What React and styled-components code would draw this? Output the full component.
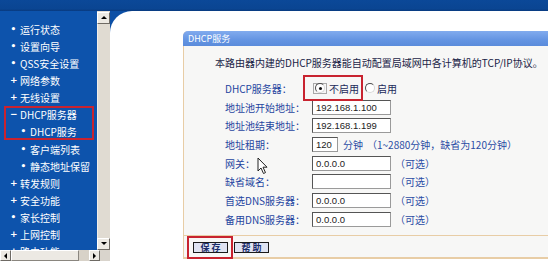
import React from 'react'
import styled, { createGlobalStyle } from 'styled-components'

const GlobalStyle = createGlobalStyle`
  html, body { margin:0; padding:0; background:#fff; }
  body { font-family:"Noto Sans CJK SC", sans-serif; }
`

const menuTop = [
  { mark: '•', text: '运行状态' },
  { mark: '•', text: '设置向导' },
  { mark: '•', text: 'QSS安全设置' },
  { mark: '+', text: '网络参数' },
  { mark: '+', text: '无线设置' },
]
const menuHl = [
  { mark: '−', text: 'DHCP服务器' },
  { mark: '•', text: 'DHCP服务', sub: true },
]
const menuRest = [
  { mark: '•', text: '客户端列表', sub: true },
  { mark: '•', text: '静态地址保留', sub: true },
  { mark: '+', text: '转发规则' },
  { mark: '+', text: '安全功能' },
  { mark: '•', text: '家长控制' },
  { mark: '+', text: '上网控制' },
  { mark: '+', text: '路由功能' },
]

const fields = [
  { label: '地址池开始地址：', value: '192.168.1.100' },
  { label: '地址池结束地址：', value: '192.168.1.199' },
  { label: '地址租期：', lease: true },
  { label: '网关：', value: '0.0.0.0', optional: true },
  { label: '缺省域名：', value: '', optional: true },
  { label: '首选DNS服务器：', value: '0.0.0.0', optional: true },
  { label: '备用DNS服务器：', value: '0.0.0.0', optional: true },
]

const MenuItem = ({ item }) => (
  <Item $sub={item.sub}>
    <Mark>{item.mark}</Mark>
    <span>{item.text}</span>
  </Item>
)

const Arrow = ({ dir }) => {
  const pts = {
    up: '1,5 4,2 7,5',
    down: '1,2 4,5 7,2',
    left: '5,1 2,4 5,7',
    right: '2,1 5,4 2,7',
  }[dir]
  return (
    <ArrowBtn>
      <svg width="8" height="8" viewBox="0 0 8 8">
        <polygon points={pts} fill="#000" />
      </svg>
    </ArrowBtn>
  )
}

const App = () => {
  return (
    <Frame>
      <GlobalStyle />
      <TopBar />
      <Main>
        <LeftPane>
          <LeftRow>
            <Sidebar>
              {menuTop.map((m) => <MenuItem key={m.text} item={m} />)}
              <Highlight>
                {menuHl.map((m) => <MenuItem key={m.text} item={m} />)}
              </Highlight>
              {menuRest.map((m) => <MenuItem key={m.text} item={m} />)}
            </Sidebar>
            <VScroll>
              <Arrow dir="up" />
              <VTrack />
              <Arrow dir="down" />
            </VScroll>
          </LeftRow>
          <HScroll>
            <Arrow dir="left" />
            <HThumb />
            <HTrack />
            <Arrow dir="right" />
            <Corner />
          </HScroll>
        </LeftPane>

        <Content>
          <Panel>
            <PanelHead>DHCP服务</PanelHead>
            <PanelBody>
              <Intro>本路由器内建的DHCP服务器能自动配置局域网中各计算机的TCP/IP协议。</Intro>
              <Row>
                <Label>DHCP服务器：</Label>
                <RadioBox>
                  <Focus><Radio $checked /></Focus>
                  <RadioText>不启用</RadioText>
                </RadioBox>
                <Radio />
                <RadioText>启用</RadioText>
              </Row>
              {fields.map((f) => (
                <Row key={f.label}>
                  <Label>{f.label}</Label>
                  {f.lease ? (
                    <>
                      <Field value="120" readOnly $w={26} />
                      <Note $gap={5}>分钟</Note>
                      <Note $gap={4}>（1~2880分钟，缺省为120分钟）</Note>
                    </>
                  ) : (
                    <>
                      <Field value={f.value} readOnly $w={79} />
                      {f.optional && <Note $gap={4}>（可选）</Note>}
                    </>
                  )}
                </Row>
              ))}
            </PanelBody>
            <PanelFoot>
              <SaveMark>
                <Btn>保 存</Btn>
              </SaveMark>
              <Btn>帮 助</Btn>
            </PanelFoot>
          </Panel>
        </Content>
      </Main>
      <Cursor width="12" height="18" viewBox="0 0 12 18">
        <path d="M1 1 L1 14 L4 11 L6.5 16.5 L8.5 15.6 L6 10.2 L10 10.2 Z" fill="#fff" stroke="#222" strokeWidth="1" strokeLinejoin="round" />
      </Cursor>
    </Frame>
  )
}

const Frame = styled.div`
  position:relative;
  width:548px;
  height:261px;
  display:flex;
  flex-direction:column;
  overflow:hidden;
  background:#0c4fa6;
`

const TopBar = styled.div`
  height:11px;
  flex-shrink:0;
  background:linear-gradient(#0b4898, #0a4592 80%, #083a80);
`

const Main = styled.div`
  flex:1;
  min-height:0;
  display:flex;
`

const LeftPane = styled.div`
  width:110px;
  flex-shrink:0;
  display:flex;
  flex-direction:column;
`

const LeftRow = styled.div`
  flex:1;
  min-height:0;
  display:flex;
`

const Sidebar = styled.div`
  width:97px;
  overflow:hidden;
  padding-top:9.5px;
  background:#0d53ac;
  box-sizing:border-box;
`

const Item = styled.div`
  height:17.15px;
  display:flex;
  align-items:center;
  padding-left:${(p) => (p.$sub ? '20px' : '10px')};
  color:#fff;
  font-size:10px;
  line-height:17px;
  white-space:nowrap;
`

const Mark = styled.span`
  width:7px;
  margin-right:3px;
  text-align:center;
  font-family:"DejaVu Sans", sans-serif;
  font-size:9px;
  font-weight:bold;
`

const Highlight = styled.div`
  position:relative;
  &::after{
    content:"";
    position:absolute;
    top:0;
    bottom:0;
    left:4px;
    right:3px;
    border:2px solid #c8232f;
  }
`

const VScroll = styled.div`
  width:13px;
  display:flex;
  flex-direction:column;
  padding-top:1px;
  background:#e3ded6;
  box-sizing:border-box;
`

const ArrowBtn = styled.div`
  width:11px;
  height:10px;
  flex-shrink:0;
  display:flex;
  align-items:center;
  justify-content:center;
  background:#ece9e3;
  border:1px solid;
  border-color:#fff #6e6a64 #6e6a64 #fff;
`

const VTrack = styled.div`
  flex:1;
  background:#e0dbd2;
  border-left:1px solid #f1eee9;
`

const HScroll = styled.div`
  height:11px;
  flex-shrink:0;
  display:flex;
  background:#e3ded6;
  & > ${ArrowBtn}{
    width:9px;
    height:9px;
  }
`

const HThumb = styled.div`
  width:66px;
  background:#ece9e3;
  border:1px solid;
  border-color:#fff #8a867f #8a867f #fff;
`

const HTrack = styled.div`
  width:10px;
  background:#d8d2c8;
`

const Corner = styled.div`
  flex:1;
  background:#d9d4cc;
`

const Content = styled.div`
  flex:1;
  min-width:0;
  background:#fff;
  border-top-left-radius:22px;
  overflow:hidden;
  padding:20px 0 0 73px;
`

const Panel = styled.div`
  width:390px;
  border:1px solid #e8cda6;
  border-top:none;
  border-top-left-radius:5px;
  background:#f7f7f6;
`

const PanelHead = styled.div`
  height:15px;
  margin:0 -1px;
  padding-left:5px;
  border-top-left-radius:5px;
  background:linear-gradient(#82abee, #6394e2 60%, #5a8bdb);
  color:#fff;
  font-size:9px;
  line-height:15px;
`

const PanelBody = styled.div`
  padding:9px 0 6px 31px;
  border-bottom:1px solid #e8cda6;
`

const Intro = styled.div`
  height:16px;
  line-height:16px;
  font-size:10px;
  color:#1a2446;
  white-space:nowrap;
  margin-bottom:8px;
`

const Row = styled.div`
  height:18.7px;
  display:flex;
  align-items:center;
  padding-left:10px;
  white-space:nowrap;
`

const Label = styled.span`
  width:87px;
  flex-shrink:0;
  font-size:10px;
  color:#1f45a0;
`

const RadioBox = styled.span`
  position:relative;
  display:flex;
  align-items:center;
  margin-right:6px;
  &::after{
    content:"";
    position:absolute;
    left:-9px;
    right:-4px;
    top:-6px;
    bottom:-5px;
    border:2px solid #c8232f;
  }
`

const Focus = styled.span`
  display:flex;
  align-items:center;
  justify-content:center;
  width:14px;
  height:11px;
  border:1px solid #a9a9a9;
  margin-left:1px;
  box-sizing:border-box;
`

const Radio = styled.span`
  width:8px;
  height:8px;
  border-radius:50%;
  background:#fff;
  border:1px solid;
  border-color:#4d4d4d #d8d8d8 #d8d8d8 #4d4d4d;
  display:flex;
  align-items:center;
  justify-content:center;
  &::before{
    content:"";
    width:3px;
    height:3px;
    border-radius:50%;
    background:${(p) => (p.$checked ? '#111' : 'transparent')};
  }
`

const RadioText = styled.span`
  margin-left:2px;
  font-size:10px;
  color:#1c2a5a;
`

const Field = styled.input`
  width:${(p) => p.$w}px;
  height:15px;
  box-sizing:border-box;
  padding:0 3px;
  margin:0;
  border:1px solid;
  border-color:#555 #9a9a9a #9a9a9a #555;
  background:#fff;
  font-family:"Liberation Sans", sans-serif;
  font-size:9.5px;
  color:#222;
  outline:none;
`

const Note = styled.span`
  margin-left:${(p) => p.$gap}px;
  font-size:10px;
  color:#2b4ca4;
`

const PanelFoot = styled.div`
  height:22px;
  box-sizing:border-box;
  padding:6px 0 0 9px;
  display:flex;
  align-items:flex-start;
  gap:6px;
  border-bottom:1px solid #e8cda6;
`

const SaveMark = styled.span`
  position:relative;
  display:flex;
  &::after{
    content:"";
    position:absolute;
    left:-6px;
    right:-5px;
    top:-6px;
    bottom:-6px;
    border:2px solid #c8232f;
  }
`

const Btn = styled.span`
  width:35px;
  height:11px;
  box-sizing:border-box;
  display:flex;
  align-items:center;
  justify-content:center;
  background:#dfe3f2;
  border:1px solid #1b1b1b;
  font-size:9px;
  line-height:9px;
  font-weight:bold;
  color:#1b2d6a;
`

const Cursor = styled.svg`
  position:absolute;
  left:257px;
  top:157px;
`

export default App
